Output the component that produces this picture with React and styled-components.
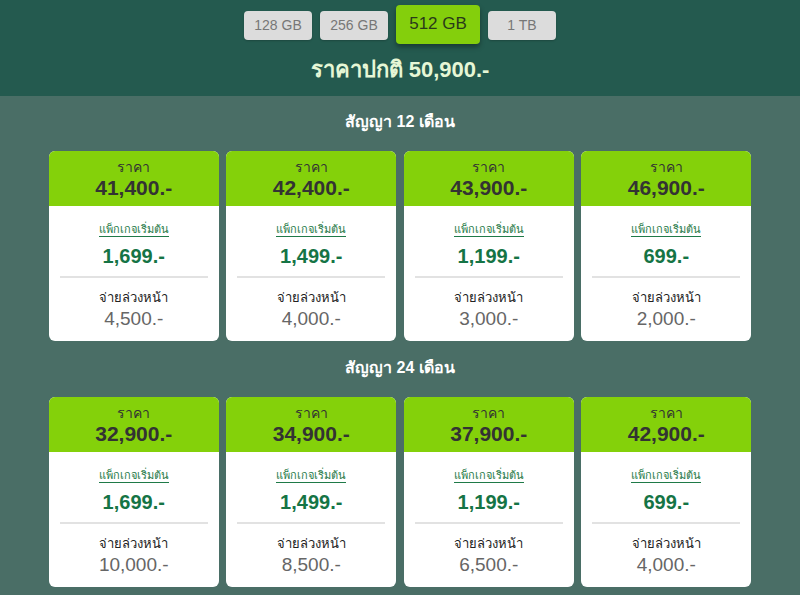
import React from "react";
import styled, { createGlobalStyle } from "styled-components";

const Global = createGlobalStyle`
  html, body {
    margin: 0;
    padding: 0;
    background: #4a6e66;
    font-family: "Liberation Sans", "Noto Sans", "DejaVu Sans", sans-serif;
  }
`;

const Page = styled.div`
  width: 800px;
  height: 595px;
  overflow: hidden;
  background: #4a6e66;
`;

const Header = styled.div`
  background: #245a4f;
  height: 96px;
  display: flex;
  flex-direction: column;
  align-items: center;
`;

const Tabs = styled.div`
  display: flex;
  align-items: center;
  gap: 8px;
  height: 48px;
`;

const Tab = styled.div`
  display: flex;
  align-items: center;
  justify-content: center;
  border-radius: 4px;
  font-family: "Liberation Sans", sans-serif;
  font-size: ${(p) => (p.active ? "17px" : "14px")};
  width: ${(p) => (p.active ? "84px" : "68px")};
  height: ${(p) => (p.active ? "39px" : "29px")};
  background: ${(p) => (p.active ? "#84cf0c" : "#dcdcdc")};
  color: ${(p) => (p.active ? "#2a3a1a" : "#777")};
  box-shadow: ${(p) => (p.active ? "0 3px 5px rgba(0,0,0,0.35)" : "0 1px 2px rgba(0,0,0,0.2)")};
  margin-top: ${(p) => (p.active ? "0" : "2px")};
`;

const Regular = styled.div`
  color: #e6f7d6;
  font-size: 22px;
  font-weight: bold;
  margin-top: 4px;
`;

const Section = styled.div`
  display: flex;
  flex-direction: column;
  align-items: center;
  padding-top: ${(p) => p.top}px;
`;

const SectionTitle = styled.div`
  color: #ffffff;
  font-size: 16px;
  font-weight: bold;
  height: 20px;
  line-height: 20px;
  margin-bottom: 19px;
`;

const Grid = styled.div`
  display: grid;
  grid-template-columns: repeat(4, 170px);
  column-gap: 7.5px;
`;

const Card = styled.div`
  background: #fff;
  border-radius: 6px;
  overflow: hidden;
  height: 190px;
  display: flex;
  flex-direction: column;
  align-items: center;
`;

const CardHead = styled.div`
  background: #84d10a;
  width: 100%;
  height: 55px;
  display: flex;
  flex-direction: column;
  align-items: center;
  padding-top: 8px;
  box-sizing: border-box;
  color: #333;
`;

const Label = styled.div`
  font-size: 14px;
  line-height: 16px;
`;

const Price = styled.div`
  font-size: 21px;
  font-weight: bold;
  line-height: 26px;
`;

const Package = styled.div`
  margin-top: 16px;
  font-size: 11px;
  line-height: 14px;
  color: #1f7a48;
  border-bottom: 1px solid #1f7a48;
`;

const Monthly = styled.div`
  margin-top: 6px;
  font-size: 20px;
  font-weight: bold;
  line-height: 26px;
  color: #157445;
`;

const Divider = styled.div`
  width: 148px;
  height: 2px;
  background: #e2e2e2;
  margin-top: 7px;
`;

const Upfront = styled.div`
  margin-top: 12px;
  font-size: 13px;
  line-height: 16px;
  color: #222;
`;

const UpfrontValue = styled.div`
  margin-top: 2px;
  font-size: 19px;
  line-height: 22px;
  color: #666;
`;

const tabs = ["128 GB", "256 GB", "512 GB", "1 TB"];

const plans = [
  {
    title: "สัญญา 12 เดือน",
    top: 16,
    cards: [
      ["41,400.-", "1,699.-", "4,500.-"],
      ["42,400.-", "1,499.-", "4,000.-"],
      ["43,900.-", "1,199.-", "3,000.-"],
      ["46,900.-", "699.-", "2,000.-"],
    ],
  },
  {
    title: "สัญญา 24 เดือน",
    top: 17,
    cards: [
      ["32,900.-", "1,699.-", "10,000.-"],
      ["34,900.-", "1,499.-", "8,500.-"],
      ["37,900.-", "1,199.-", "6,500.-"],
      ["42,900.-", "699.-", "4,000.-"],
    ],
  },
];

export default function App() {
  return (
    <Page>
      <Global />
      <Header>
        <Tabs>
          {tabs.map((t) => (
            <Tab key={t} active={t === "512 GB"}>
              {t}
            </Tab>
          ))}
        </Tabs>
        <Regular>ราคาปกติ 50,900.-</Regular>
      </Header>
      {plans.map((plan) => (
        <Section key={plan.title} top={plan.top}>
          <SectionTitle>{plan.title}</SectionTitle>
          <Grid>
            {plan.cards.map(([price, monthly, upfront], i) => (
              <Card key={i}>
                <CardHead>
                  <Label>ราคา</Label>
                  <Price>{price}</Price>
                </CardHead>
                <Package>แพ็กเกจเริ่มต้น</Package>
                <Monthly>{monthly}</Monthly>
                <Divider />
                <Upfront>จ่ายล่วงหน้า</Upfront>
                <UpfrontValue>{upfront}</UpfrontValue>
              </Card>
            ))}
          </Grid>
        </Section>
      ))}
    </Page>
  );
}
